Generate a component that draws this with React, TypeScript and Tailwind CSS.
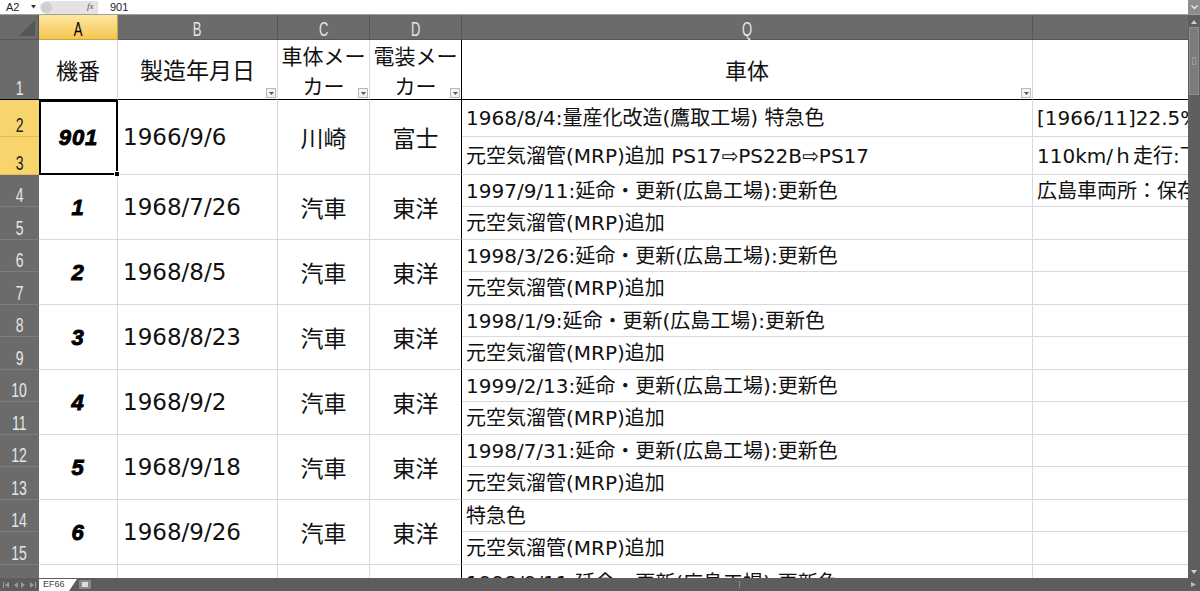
import React from "react";

const jp = { fontFamily: '"DejaVu Sans", "Noto Sans CJK JP", "Noto Sans", sans-serif' };
const jpOnly = { fontFamily: '"Noto Sans CJK JP", "Noto Sans", sans-serif' };
const narrow = { fontFamily: '"Liberation Sans", Arial, sans-serif' };

type Pair = {
  no: string;
  date: string;
  body: string;
  elec: string;
  q1: string;
  q2: string;
  r1?: string;
  r2?: string;
};

const data: Pair[] = [
  {
    no: "901",
    date: "1966/9/6",
    body: "川崎",
    elec: "富士",
    q1: "1968/8/4:量産化改造(鷹取工場) 特急色",
    q2: "元空気溜管(MRP)追加 PS17⇨PS22B⇨PS17",
    r1: "[1966/11]22.5‰勾配起動試験",
    r2: "110km/ｈ走行:下関",
  },
  {
    no: "1",
    date: "1968/7/26",
    body: "汽車",
    elec: "東洋",
    q1: "1997/9/11:延命・更新(広島工場):更新色",
    q2: "元空気溜管(MRP)追加",
    r1: "広島車両所：保存",
  },
  { no: "2", date: "1968/8/5", body: "汽車", elec: "東洋", q1: "1998/3/26:延命・更新(広島工場):更新色", q2: "元空気溜管(MRP)追加" },
  { no: "3", date: "1968/8/23", body: "汽車", elec: "東洋", q1: "1998/1/9:延命・更新(広島工場):更新色", q2: "元空気溜管(MRP)追加" },
  { no: "4", date: "1968/9/2", body: "汽車", elec: "東洋", q1: "1999/2/13:延命・更新(広島工場):更新色", q2: "元空気溜管(MRP)追加" },
  { no: "5", date: "1968/9/18", body: "汽車", elec: "東洋", q1: "1998/7/31:延命・更新(広島工場):更新色", q2: "元空気溜管(MRP)追加" },
  { no: "6", date: "1968/9/26", body: "汽車", elec: "東洋", q1: "特急色", q2: "元空気溜管(MRP)追加" },
];

function FilterBtn() {
  return (
    <div className="absolute bottom-[1px] right-[1px] w-[10px] h-[10px] bg-[#f3f3f3] border border-[#b8b8b8] flex items-center justify-center">
      <svg width="5" height="3" viewBox="0 0 5 3">
        <path d="M0 0 L5 0 L2.5 3 Z" fill="#555" />
      </svg>
    </div>
  );
}

function ColHead({ label, active }: { label: string; active?: boolean }) {
  return (
    <div
      className={
        active
          ? "flex items-center justify-center bg-gradient-to-b from-[#fde7a0] to-[#f6c54e] border-r border-b border-[#c9a24a] text-black"
          : "flex items-center justify-center bg-[#6b6b6b] border-r border-b border-[#565656] text-[#e4e4e4]"
      }
      style={narrow}
    >
      <span className="inline-block text-[21px] scale-x-[0.62] leading-none mt-[2px]">{label}</span>
    </div>
  );
}

function RowHead({ n, active }: { n: number; active?: boolean }) {
  return (
    <div
      className={
        active
          ? "flex items-end justify-center pb-[1px] bg-[#f8d46c] border-b border-[#e3bd55] text-[#222]"
          : "flex items-end justify-center pb-[1px] bg-[#6b6b6b] border-b border-[#7d7d7d] text-[#e6e6e6]"
      }
      style={narrow}
    >
      <span className="inline-block text-[20px] scale-x-[0.7] leading-none">{n}</span>
    </div>
  );
}

function NavArrow({ dir, bar }: { dir: "l" | "r"; bar?: boolean }) {
  return (
    <svg width="7" height="6" viewBox="0 0 7 6">
      {dir === "l" ? <path d="M6 0 L6 6 L2 3 Z" fill="#9a9a9a" /> : <path d="M1 0 L1 6 L5 3 Z" fill="#9a9a9a" />}
      {bar && (dir === "l" ? <rect x="0" y="0" width="1" height="6" fill="#9a9a9a" /> : <rect x="6" y="0" width="1" height="6" fill="#9a9a9a" />)}
    </svg>
  );
}

export default function App() {
  return (
    <div className="w-[1200px] h-[591px] overflow-hidden bg-white flex flex-col">
      {/* formula bar */}
      <div className="h-[15px] flex items-center border-b border-[#a0a0a0] bg-white text-[11px] text-[#222] relative" style={narrow}>
        <div className="w-[40px] h-full flex items-center pl-[6px] relative">
          <span>A2</span>
          <svg className="absolute left-[31px] top-[5px]" width="5" height="4" viewBox="0 0 5 4">
            <path d="M0 0 L5 0 L2.5 3.5 Z" fill="#333" />
          </svg>
        </div>
        <div className="w-[58px] h-[13px] rounded-l-full bg-[#e3e3e3] relative flex items-center">
          <div className="absolute left-[1px] top-[1px] w-[11px] h-[11px] rounded-full bg-[#cfcfcf]" />
          <span className="absolute left-[47px] top-[-1px] text-[9px] italic text-[#555]" style={{ fontFamily: '"Liberation Serif", serif' }}>
            fx
          </span>
        </div>
        <span className="ml-[12px]">901</span>
        <div className="absolute right-0 top-0 w-[12px] h-[14px] bg-[#8d8d8d] flex items-center justify-center">
          <svg width="7" height="5" viewBox="0 0 7 5">
            <path d="M0.5 0.5 L3.5 3.5 L6.5 0.5" stroke="#eee" strokeWidth="1.3" fill="none" />
          </svg>
        </div>
      </div>

      {/* main area */}
      <div className="h-[563px] flex overflow-hidden">
        <div className="flex-1 overflow-hidden">
          <div className="grid grid-cols-[39px_79px_160px_92px_92px_571px_155px] grid-rows-[25px_60px_37px_38px_repeat(6,32px_33px)_32px]">
            {/* header row */}
            <div className="bg-[#6b6b6b] border-r border-b border-[#565656] relative">
              <svg className="absolute right-[3px] bottom-[3px]" width="16" height="16" viewBox="0 0 16 16">
                <path d="M16 0 L16 16 L0 16 Z" fill="#555555" />
              </svg>
            </div>
            <ColHead label="A" active />
            <ColHead label="B" />
            <ColHead label="C" />
            <ColHead label="D" />
            <ColHead label="Q" />
            <div className="bg-[#6b6b6b] border-b border-[#565656]" />

            {/* row 1 */}
            <div className="bg-[#6b6b6b] border-b border-black flex items-end justify-center pb-[1px] text-[#e6e6e6]" style={narrow}>
              <span className="inline-block text-[20px] scale-x-[0.7] leading-none">1</span>
            </div>
            <div className="border-r border-b border-r-[#d9d9d9] border-b-black flex items-center justify-center text-[22px] text-[#111]" style={jpOnly}>
              機番
            </div>
            <div className="relative border-r border-b border-r-[#d9d9d9] border-b-black flex items-center justify-center text-[23px] text-[#111]" style={jpOnly}>
              製造年月日
              <FilterBtn />
            </div>
            <div className="relative border-r border-b border-r-[#d9d9d9] border-b-black flex flex-col items-center justify-center text-[21px] leading-[30px] text-[#111]" style={jpOnly}>
              <span>車体メー</span>
              <span>カー</span>
              <FilterBtn />
            </div>
            <div className="relative border-r border-b border-r-black border-b-black flex flex-col items-center justify-center text-[21px] leading-[30px] text-[#111]" style={jpOnly}>
              <span>電装メー</span>
              <span>カー</span>
              <FilterBtn />
            </div>
            <div className="relative border-r border-b border-r-[#d9d9d9] border-b-black flex items-center justify-center text-[22px] text-[#111]" style={jpOnly}>
              車体
              <FilterBtn />
            </div>
            <div className="border-b border-black" />

            {/* data rows */}
            {data.map((d, i) => {
              const r = 2 + i * 2;
              const first = i === 0;
              return (
                <React.Fragment key={d.no}>
                  <RowHead n={r} active={first} />
                  <div
                    className={
                      first
                        ? "row-span-2 relative border-2 border-black flex items-center justify-center text-[22px] tracking-[1px] font-bold italic text-black"
                        : "row-span-2 border-r border-b border-[#d9d9d9] flex items-center justify-center text-[22px] tracking-[1px] font-bold italic text-black"
                    }
                    style={{ ...narrow, WebkitTextStroke: "0.9px black" }}
                  >
                    {d.no}
                    {first && (
                      <div className="absolute -right-[4px] -bottom-[4px] w-[6px] h-[6px] bg-black border border-white" />
                    )}
                  </div>
                  <div className="row-span-2 border-r border-b border-[#d9d9d9] flex items-center pl-[5px] text-[23px] text-[#111]" style={jp}>
                    {d.date}
                  </div>
                  <div className="row-span-2 border-r border-b border-[#d9d9d9] flex items-center justify-center text-[23px] text-[#111]" style={jpOnly}>
                    {d.body}
                  </div>
                  <div className="row-span-2 border-r border-b border-r-black border-b-[#d9d9d9] flex items-center justify-center text-[23px] text-[#111]" style={jpOnly}>
                    {d.elec}
                  </div>
                  <div className="border-r border-b border-[#d9d9d9] flex items-center pl-[4px] text-[20px] text-[#111] whitespace-nowrap overflow-hidden" style={jp}>
                    {d.q1}
                  </div>
                  <div className="border-b border-[#d9d9d9] flex items-center pl-[4px] text-[20px] text-[#111] whitespace-nowrap overflow-hidden" style={jp}>
                    {d.r1 ?? ""}
                  </div>

                  <RowHead n={r + 1} active={first} />
                  <div className="border-r border-b border-[#d9d9d9] flex items-center pl-[4px] text-[20px] text-[#111] whitespace-nowrap overflow-hidden" style={jp}>
                    {d.q2}
                  </div>
                  <div className="border-b border-[#d9d9d9] flex items-center pl-[4px] text-[20px] text-[#111] whitespace-nowrap overflow-hidden" style={jp}>
                    {d.r2 ?? ""}
                  </div>
                </React.Fragment>
              );
            })}

            {/* row 16 partial */}
            <RowHead n={16} />
            <div className="border-r border-b border-[#d9d9d9]" />
            <div className="border-r border-b border-[#d9d9d9]" />
            <div className="border-r border-b border-[#d9d9d9]" />
            <div className="border-r border-b border-r-black border-b-[#d9d9d9]" />
            <div className="border-r border-b border-[#d9d9d9] flex items-start pt-[3px] pl-[4px] text-[20px] text-[#111] whitespace-nowrap overflow-hidden" style={jp}>
              1998/9/11:延命・更新(広島工場):更新色
            </div>
            <div className="border-b border-[#d9d9d9]" />
          </div>
        </div>

        {/* vertical scrollbar */}
        <div className="w-[12px] bg-[#5f5f5f] flex flex-col items-center">
          <svg className="mt-[5px]" width="6" height="4" viewBox="0 0 6 4">
            <path d="M0 4 L6 4 L3 0 Z" fill="#d0d0d0" />
          </svg>
          <div className="mt-[3px] w-[10px] h-[68px] bg-[#7b7b7b] border border-[#8e8e8e] flex items-center justify-center">
            <div className="w-[4px] h-[8px] border border-[#9a9a9a]" />
          </div>
          <div className="flex-1" />
          <svg className="mb-[4px]" width="6" height="4" viewBox="0 0 6 4">
            <path d="M0 0 L6 0 L3 4 Z" fill="#d0d0d0" />
          </svg>
        </div>
      </div>

      {/* sheet tab bar */}
      <div className="h-[13px] bg-[#5d5d5d] flex items-stretch relative" style={narrow}>
        <div className="w-[39px] flex items-center justify-around px-[2px]">
          <NavArrow dir="l" bar />
          <NavArrow dir="l" />
          <NavArrow dir="r" />
          <NavArrow dir="r" bar />
        </div>
        <div className="relative flex items-center">
          <div className="h-[12px] bg-white pl-[4px] pr-[4px] flex items-center text-[9px] text-[#444]">EF66</div>
          <svg width="8" height="12" viewBox="0 0 8 12">
            <path d="M0 0 L0 12 L8 0 Z" fill="#ffffff" />
          </svg>
          <div className="ml-[2px] w-[12px] h-[9px] bg-[#8a8a8a] rounded-[1px] flex items-center justify-center">
            <div className="w-[6px] h-[5px] bg-[#dcdcdc]" />
          </div>
        </div>
        <div className="flex-1" />
        <div className="w-[1px] bg-[#888] my-[3px] mr-[460px]" />
        <svg className="absolute right-[4px] top-[4px]" width="5" height="5" viewBox="0 0 5 5">
          <path d="M0 0 L5 2.5 L0 5 Z" fill="#bbb" />
        </svg>
      </div>
    </div>
  );
}
